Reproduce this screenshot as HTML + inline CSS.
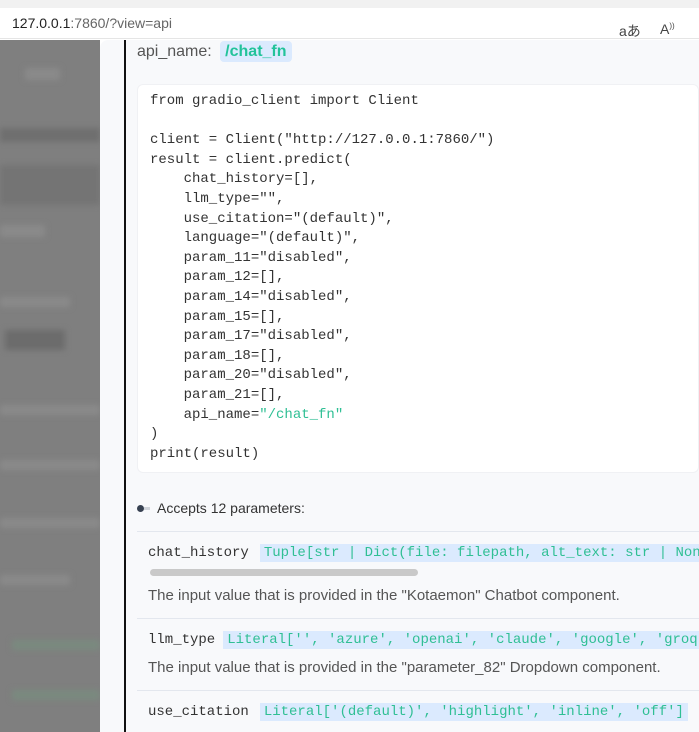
<!DOCTYPE html>
<html><head><meta charset="utf-8"><style>
*{margin:0;padding:0;box-sizing:border-box}
body{width:699px;height:732px;overflow:hidden;background:#fff;font-family:"Liberation Sans",sans-serif;position:relative}
.top{position:absolute;left:0;top:0;width:699px;height:8px;background:#f1f1f1}
.addr{position:absolute;left:0;top:8px;width:699px;height:31px;background:#fff;border-bottom:1px solid #e5e5e5}
.addr .url{position:absolute;left:12px;top:7px;font-size:14px;color:#666}
.addr .url b{font-weight:normal;color:#222}
.ic{position:absolute;top:13px;font-size:14px;color:#444}
.side{position:absolute;left:0;top:40px;width:100px;height:692px;background:#7f7f7f}
.blur{position:absolute;background:#8a8a8a;filter:blur(3px)}
.panel{position:absolute;left:100px;top:40px;width:599px;height:692px;background:#f8f9fb;border-top-left-radius:8px}
.vl{position:absolute;left:124px;top:40px;width:2px;height:692px;background:#111}
.api{position:absolute;left:137px;top:43px;font-size:16px;color:#555}
.badge{background:#dbeafe;color:#22c39a;font-weight:bold;padding:2px 5px;border-radius:4px;margin-left:4px}
.code{position:absolute;left:137px;top:84px;width:562px;height:389px;background:#fff;border-radius:6px;border:1px solid #f0f1f4}
pre{position:absolute;left:150px;top:92px;font-family:"Liberation Mono",monospace;font-size:14px;line-height:19.6px;color:#333}
.g{color:#2fbf94}
.acc{position:absolute;left:157px;top:500px;font-size:14px;color:#333}
.dot{position:absolute;left:137px;top:505px;width:7px;height:7px;border-radius:50%;background:#374151}
.dash{position:absolute;left:144px;top:507px;width:6px;height:3px;background:#d1d5db}
.hr{position:absolute;left:137px;width:562px;height:1px;background:#e3e7ee}
.pn{position:absolute;left:148px;font-family:"Liberation Mono",monospace;font-size:14px;color:#333}
.ty{background:#dbeafe;color:#2fbf94;padding:1px 4px;margin-left:8px;white-space:nowrap}
.ds{position:absolute;left:148px;font-size:15px;color:#555;white-space:nowrap}
.sb{position:absolute;left:150px;top:569px;width:268px;height:7px;border-radius:4px;background:#c9c9c9}
</style></head><body>
<div class="top"></div>
<div class="addr"><span class="url"><b>127.0.0.1</b>:7860/?view=api</span><span class="ic" style="left:619px">aあ</span><span class="ic" style="left:660px">A<sup style="font-size:8px">))</sup></span></div>
<div class="side">
<div class="blur" style="left:25px;top:28px;width:35px;height:12px"></div>
<div class="blur" style="left:0;top:88px;width:100px;height:14px;background:#6f6f6f"></div>
<div class="blur" style="left:0;top:125px;width:100px;height:40px;background:#747474"></div>
<div class="blur" style="left:0;top:185px;width:45px;height:12px"></div>
<div class="blur" style="left:0;top:257px;width:70px;height:10px"></div>
<div class="blur" style="left:5px;top:290px;width:60px;height:20px;background:#6c6c6c"></div>
<div class="blur" style="left:0;top:365px;width:100px;height:10px"></div>
<div class="blur" style="left:0;top:420px;width:100px;height:10px"></div>
<div class="blur" style="left:0;top:478px;width:100px;height:10px"></div>
<div class="blur" style="left:0;top:535px;width:70px;height:10px"></div>
<div class="blur" style="left:12px;top:600px;width:88px;height:10px;background:#7a8a7f"></div>
<div class="blur" style="left:12px;top:650px;width:88px;height:10px;background:#7a8a7f"></div>
</div>
<div class="panel"></div>
<div class="vl"></div>
<div class="api">api_name: <span class="badge">/chat_fn</span></div>
<div class="code"></div>
<pre>from gradio_client import Client

client = Client("http://127.0.0.1:7860/")
result = client.predict(
    chat_history=[],
    llm_type="",
    use_citation="(default)",
    language="(default)",
    param_11="disabled",
    param_12=[],
    param_14="disabled",
    param_15=[],
    param_17="disabled",
    param_18=[],
    param_20="disabled",
    param_21=[],
    api_name=<span class="g">"/chat_fn"</span>
)
print(result)</pre>
<div class="dot"></div><div class="dash"></div>
<div class="acc">Accepts 12 parameters:</div>
<div class="hr" style="top:531px"></div>
<div class="pn" style="top:545px">chat_history<span class="ty" style="margin-left:11px">Tuple[str | Dict(file: filepath, alt_text: str | None)]</span></div>
<div class="sb"></div>
<div class="ds" style="top:587px">The input value that is provided in the "Kotaemon" Chatbot component.</div>
<div class="hr" style="top:618px"></div>
<div class="pn" style="top:632px">llm_type<span class="ty">Literal['', 'azure', 'openai', 'claude', 'google', 'groq']</span></div>
<div class="ds" style="top:659px">The input value that is provided in the "parameter_82" Dropdown component.</div>
<div class="hr" style="top:690px"></div>
<div class="pn" style="top:704px">use_citation<span class="ty" style="margin-left:11px">Literal['(default)', 'highlight', 'inline', 'off']</span></div>
</body></html>
